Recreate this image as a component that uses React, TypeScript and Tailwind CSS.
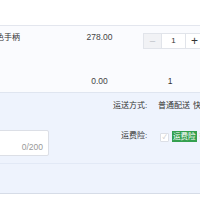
import React from 'react';

const App: React.FC = () => {
    return (
        <div className="w-[200px] h-[200px] overflow-hidden bg-white text-[8px] text-[#333] font-['Liberation_Sans','Noto_Sans_CJK_SC',sans-serif]">
            <div className="w-[260px] -ml-[12px]">
                <div className="h-[26px] bg-white border-b border-[#e3e6ee]" />

                <div className="h-[67px] bg-[#fafbfe] border-b border-[#dfe5f0]">
                    <div className="flex items-start pt-[6px]">
                        <div className="w-[86px] leading-[11px] whitespace-nowrap">金色手柄</div>
                        <div className="w-[51px] leading-[11px] text-center text-[8.5px] text-[#444]">278.00</div>
                        <div className="w-[18px]" />
                        <div className="flex h-[16px] mt-[1px]">
                            <div className="w-[19px] flex items-center justify-center bg-[#f1f2f5] border border-[#e1e4ea] text-[#c5c8ce] text-[11px]">−</div>
                            <div className="w-[23px] flex items-center justify-center bg-white border-y border-[#e1e4ea] text-[8px]">1</div>
                            <div className="w-[19px] flex items-center justify-center bg-white border border-[#e1e4ea] text-[#333] text-[12px]">+</div>
                        </div>
                    </div>
                    <div className="flex mt-[27px] leading-[11px]">
                        <div className="w-[86px]" />
                        <div className="w-[51px] text-center text-[8.5px] text-[#444]">0.00</div>
                        <div className="w-[90px] text-center text-[8.5px]">1</div>
                    </div>
                </div>

                <div className="bg-[#eef3fd] h-[101px] border-b border-[#d6dce7]">
                    <div className="flex h-[26px] items-center">
                        <div className="w-[125px]" />
                        <div className="w-[45px]">运送方式:</div>
                        <div className="flex gap-[3px] whitespace-nowrap">
                            <span>普通配送</span>
                            <span>快递</span>
                        </div>
                    </div>
                    <div className="flex h-[45px] pt-[11px] border-b border-[#e2e9f6]">
                        <div className="w-[61px] h-[26px] bg-white border border-[#dcdfe6] rounded-[2px] flex items-end justify-end pr-[5px] pb-[2px] text-[8.5px] leading-[11px] text-[#999]">0/200</div>
                        <div className="w-[72px]" />
                        <div className="w-[39px] leading-[12px]">运费险:</div>
                        <div className="flex items-start gap-[3px] whitespace-nowrap">
                            <div className="w-[9px] h-[9px] mt-[3px] bg-white border border-[#dcdfe6] rounded-[1px] flex items-center justify-center text-[#bbb] text-[6px]">✓</div>
                            <span className="mt-[1px] bg-[#34a04f] text-white px-[1px] text-[7.5px] leading-[11px]">运费险</span>
                            <span className="leading-[12px]">打</span>
                        </div>
                    </div>
                </div>
            </div>
        </div>
    );
};

export default App;
